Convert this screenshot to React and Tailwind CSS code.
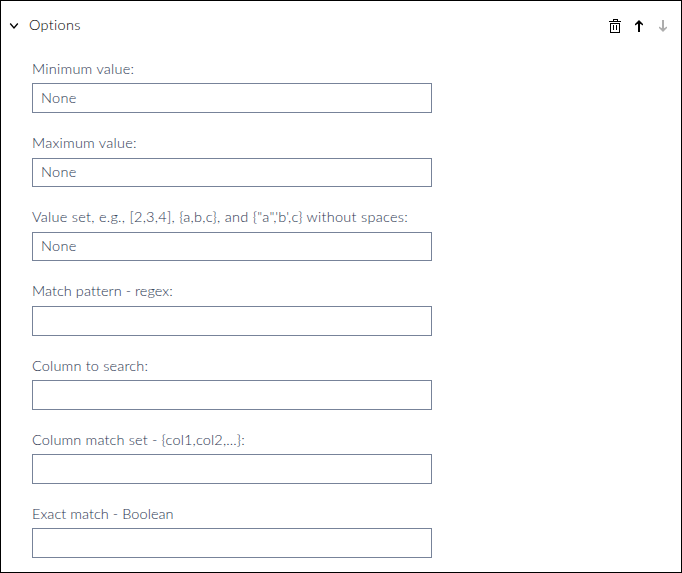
const fields = [
  { label: 'Minimum value:', value: 'None', spacing: 'tracking-[0.25px]' },
  { label: 'Maximum value:', value: 'None', spacing: 'tracking-[0.25px]' },
  {
    label: 'Value set, e.g., [2,3,4], {a,b,c}, and {"a",\'b\',c} without spaces:',
    value: 'None',
    spacing: 'tracking-[0.27px]',
  },
  { label: 'Match pattern - regex:', value: '', spacing: 'tracking-[0.05px]' },
  { label: 'Column to search:', value: '', spacing: 'tracking-[0.17px]' },
  { label: 'Column match set - {col1,col2,...}:', value: '', spacing: 'tracking-[0.15px]' },
  { label: 'Exact match - Boolean', value: '', spacing: 'tracking-[0.05px]' },
];

function Field({ label, value, spacing }) {
  return (
    <label className="block h-[74.17px]">
      <span className={`block h-[24.35px] whitespace-nowrap leading-5 ${spacing}`}>{label}</span>
      <input
        type="text"
        defaultValue={value}
        className="block h-[29.75px] w-[400px] border border-[#778399] bg-white pb-0.5 pl-2 tracking-[0.3px] outline-none"
      />
    </label>
  );
}

export default function App() {
  return (
    <main className="h-[573px] w-[682px] overflow-hidden border border-black bg-white font-['Lato',sans-serif] text-[14.5px] font-light text-[#2b3650]">
      <header className="flex h-[50px] items-center pr-3 pl-2 text-black">
        <svg className="h-6 w-3" viewBox="0 0 12 24" fill="none" stroke="currentColor" strokeWidth="1.3">
          <path d="M1.2 9.5 5 14l3.8-4.5" />
        </svg>
        <h2 className="ml-2 pb-0.5 leading-5 tracking-[0.3px]">Options</h2>
        <div className="ml-auto flex items-center gap-3 text-black">
          <svg className="h-4 w-3" viewBox="0 0 12 16" fill="none" stroke="currentColor" shapeRendering="crispEdges">
            <path d="M0 3.5h12M4.5 3V1.5h4V3M1.5 5v9.5h9V5.5h-9M4.5 7v5M7.5 7v5" />
          </svg>
          <svg className="h-4 w-3" viewBox="0 0 12 16" fill="currentColor">
            <path d="M6 2 10 6v1.5L7 5.8V14H5V5.8L2 7.5V6z" />
          </svg>
          <svg className="h-4 w-3 text-[#adadad]" viewBox="0 0 12 16" fill="currentColor">
            <path d="M6 14 2 10V8.5l3 1.7V2h2v8.2l3-1.7V10z" />
          </svg>
        </div>
      </header>
      <section className="pt-2 pl-[31px]">
        {fields.map((field) => (
          <Field key={field.label} {...field} />
        ))}
      </section>
    </main>
  );
}
